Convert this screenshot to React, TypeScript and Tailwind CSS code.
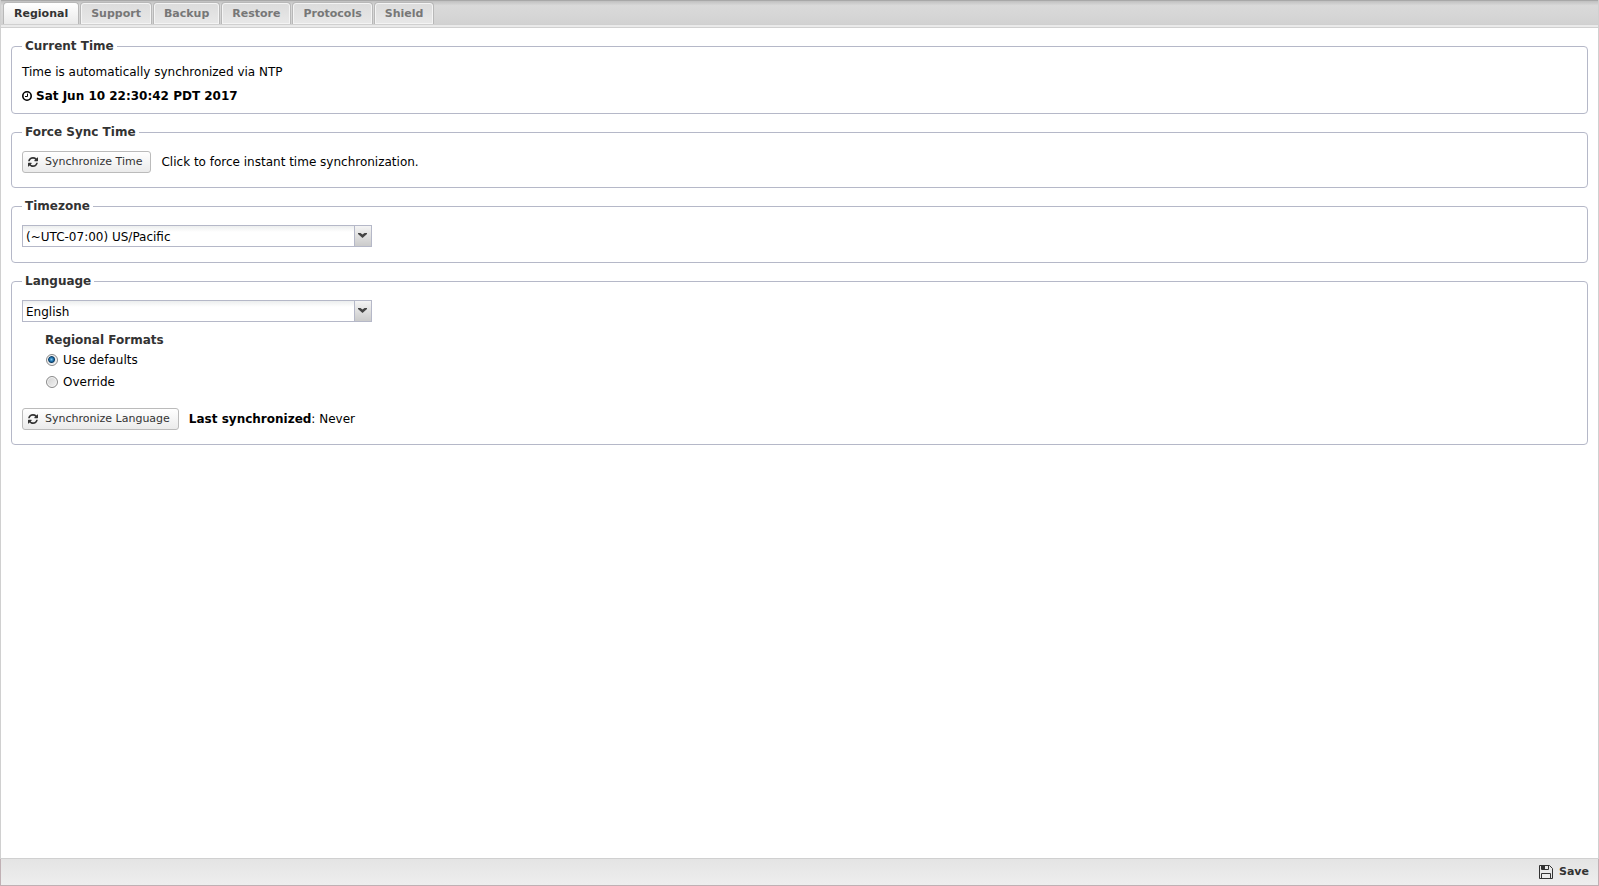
import { useState, type ReactNode } from "react";

const tabs = ["Regional", "Support", "Backup", "Restore", "Protocols", "Shield"];

function Group({ title, children }: { title: string; children: ReactNode }) {
  return (
    <fieldset className="min-w-0 rounded border border-[#b5b8c8] px-[10px]">
      <legend className="px-[3px] text-[12px] leading-4 font-bold text-[#333]">{title}</legend>
      {children}
    </fieldset>
  );
}

function SyncIcon() {
  return (
    <svg className="size-[10px] shrink-0" viewBox="0 0 1536 1536" fill="#333" aria-hidden="true">
      <path d="M1511 928q0 5-1 7-64 268-268 434.500T764 1536q-146 0-282.500-55T238 1324l-129 129q-19 19-45 19t-45-19-19-45V960q0-26 19-45t45-19h448q26 0 45 19t19 45-19 45l-137 137q71 66 161 102t187 36q134 0 250-65t186-179q11-17 53-117 8-23 30-23h192q13 0 22.500 9.500t9.500 22.500zm25-800v448q0 26-19 45t-45 19h-448q-26 0-45-19t-19-45 19-45l138-138Q969 256 768 256q-134 0-250 65T332 500q-11 17-53 117-8 23-30 23H50q-13 0-22.500-9.500T18 608v-7q65-268 270-434.500T768 0q146 0 284 55.500T1297 212l130-129q19-19 45-19t45 19 19 45z" />
    </svg>
  );
}

function ToolButton({ children }: { children: ReactNode }) {
  return (
    <button
      type="button"
      className="flex h-[22px] shrink-0 items-center gap-[7px] rounded-[3px] border border-[#bbb] bg-linear-to-b from-white to-[#ebebeb] pr-2 pl-[5px] text-[11px] text-[#333]"
    >
      <SyncIcon />
      {children}
    </button>
  );
}

function Combo({ label, options }: { label: string; options: string[] }) {
  return (
    <div className="relative h-[22px] w-[350px] max-w-full">
      <select
        aria-label={label}
        className="h-full w-full appearance-none border border-[#b5b8c8] bg-linear-to-b from-[#eceeee] to-white to-30% pt-px pr-5 pl-[3px] text-[12px] text-black"
      >
        {options.map((o) => (
          <option key={o}>{o}</option>
        ))}
      </select>
      <span className="pointer-events-none absolute inset-y-0 right-0 flex w-[18px] items-start justify-start border border-[#b5b8c8] bg-linear-to-b from-[#f4f4f4] to-[#cbcbcb] pt-[7px] pl-[3px]">
        <svg className="h-[5px] w-[9px]" viewBox="0 0 9 5" fill="#444" aria-hidden="true">
          <path d="M0 0h2.500l2 1.500 2-1.500H9v1L4.500 5 0 1z" />
        </svg>
      </span>
    </div>
  );
}

function RadioRow({ label, checked, onChange }: { label: string; checked: boolean; onChange: () => void }) {
  return (
    <label className="flex h-[22px] items-center gap-[5px]">
      <input
        type="radio"
        name="formats"
        checked={checked}
        onChange={onChange}
        className="ml-px size-3 appearance-none rounded-full border border-[#8a8a8a] bg-linear-to-br from-[#d0d0d0] to-[#f4f4f4] shadow-[inset_0_0_0_1px_#f6f6f6] checked:bg-[radial-gradient(circle_at_45%_45%,#7cc4ee_0px,#1b6da8_2px,#0d3d63_3px,#e6e6e6_4px)]"
      />
      {label}
    </label>
  );
}

export default function App() {
  const [active, setActive] = useState("Regional");
  const [format, setFormat] = useState("defaults");
  return (
    <div className="flex min-h-screen flex-col bg-white font-['DejaVu_Sans',sans-serif] text-[12px] text-black">
      <header className="border-x border-[#d0d0d0]">
        <div
          role="tablist"
          className="flex h-[25px] items-end gap-px border-t border-b border-t-[#a8a8a8] border-b-[#d0d0d0] bg-linear-to-b from-[#c0c0c0] via-[#dadada] via-20% to-[#d2d2d2] pl-[2px]"
        >
          {tabs.map((tab) => (
            <button
              key={tab}
              type="button"
              role="tab"
              aria-selected={tab === active}
              onClick={() => setActive(tab)}
              className={
                "h-[22px] rounded-t-[4px] border border-b-0 px-[10px] pt-px text-[11px] font-bold " +
                (tab === active
                  ? "border-[#b8b8b8] bg-linear-to-b from-white to-[#eaeaea] text-[#333]"
                  : "border-[#b8b8b8] bg-linear-to-b from-[#dcdcdc] to-[#e8e8e8] text-[#777] shadow-[inset_0_0_0_1px_#f4f4f4]")
              }
            >
              {tab}
            </button>
          ))}
        </div>
        <div className="h-[3px] border-b border-[#d0d0d0] bg-[#eaeaea]" />
      </header>

      <main className="flex flex-1 flex-col gap-[10px] border-x border-[#d0d0d0] p-[10px]">
        <Group title="Current Time">
          <div className="pt-[6px] pb-[5px] leading-6">
            <p>Time is automatically synchronized via NTP</p>
            <p className="flex items-center gap-1 font-bold">
              <svg className="size-[10px]" viewBox="0 0 10 10" fill="none" stroke="#000" aria-hidden="true">
                <circle cx="5" cy="5" r="4.200" strokeWidth="1.600" />
                <path d="M5.500 2.500v3H3" />
              </svg>
              <time dateTime="2017-06-10T22:30:42-07:00">Sat Jun 10 22:30:42 PDT 2017</time>
            </p>
          </div>
        </Group>

        <Group title="Force Sync Time">
          <div className="flex items-center gap-[10px] pt-[11px] pb-[14px]">
            <ToolButton>Synchronize Time</ToolButton>
            <span>Click to force instant time synchronization.</span>
          </div>
        </Group>

        <Group title="Timezone">
          <div className="pt-[11px] pb-[15px]">
            <Combo label="Timezone" options={["(~UTC-07:00) US/Pacific"]} />
          </div>
        </Group>

        <Group title="Language">
          <div className="pt-[11px] pb-[14px]">
            <Combo label="Language" options={["English"]} />
            <div role="radiogroup" aria-labelledby="formats-title" className="mt-[9px] mb-[15px] pl-[23px]">
              <h3 id="formats-title" className="text-[12px] leading-[18px] font-bold text-[#333]">
                Regional Formats
              </h3>
              <RadioRow label="Use defaults" checked={format === "defaults"} onChange={() => setFormat("defaults")} />
              <RadioRow label="Override" checked={format === "override"} onChange={() => setFormat("override")} />
            </div>
            <div className="flex items-center gap-[10px]">
              <ToolButton>Synchronize Language</ToolButton>
              <span>
                <b>Last synchronized</b>: Never
              </span>
            </div>
          </div>
        </Group>
      </main>

      <footer className="border-t border-[#d0d0d0]">
        <div className="flex h-[27px] items-center justify-end border border-t-0 border-[#c0b0b4] bg-linear-to-b from-[#e4e4e4] to-[#eee] pr-[9px]">
          <button type="button" className="flex items-center gap-[6px] text-[11px] font-bold text-[#333]">
            <svg className="size-[14px]" viewBox="0 0 14 14" fill="none" stroke="#333" aria-hidden="true">
              <path d="M.5 .5h10l3 3v10H.5z" />
              <path d="M2.500 .5v4h7v-4M2.500 13V8.500h9V13" />
              <path d="M3 1h3v3H3z" fill="#333" stroke="none" />
            </svg>
            Save
          </button>
        </div>
      </footer>
    </div>
  );
}
